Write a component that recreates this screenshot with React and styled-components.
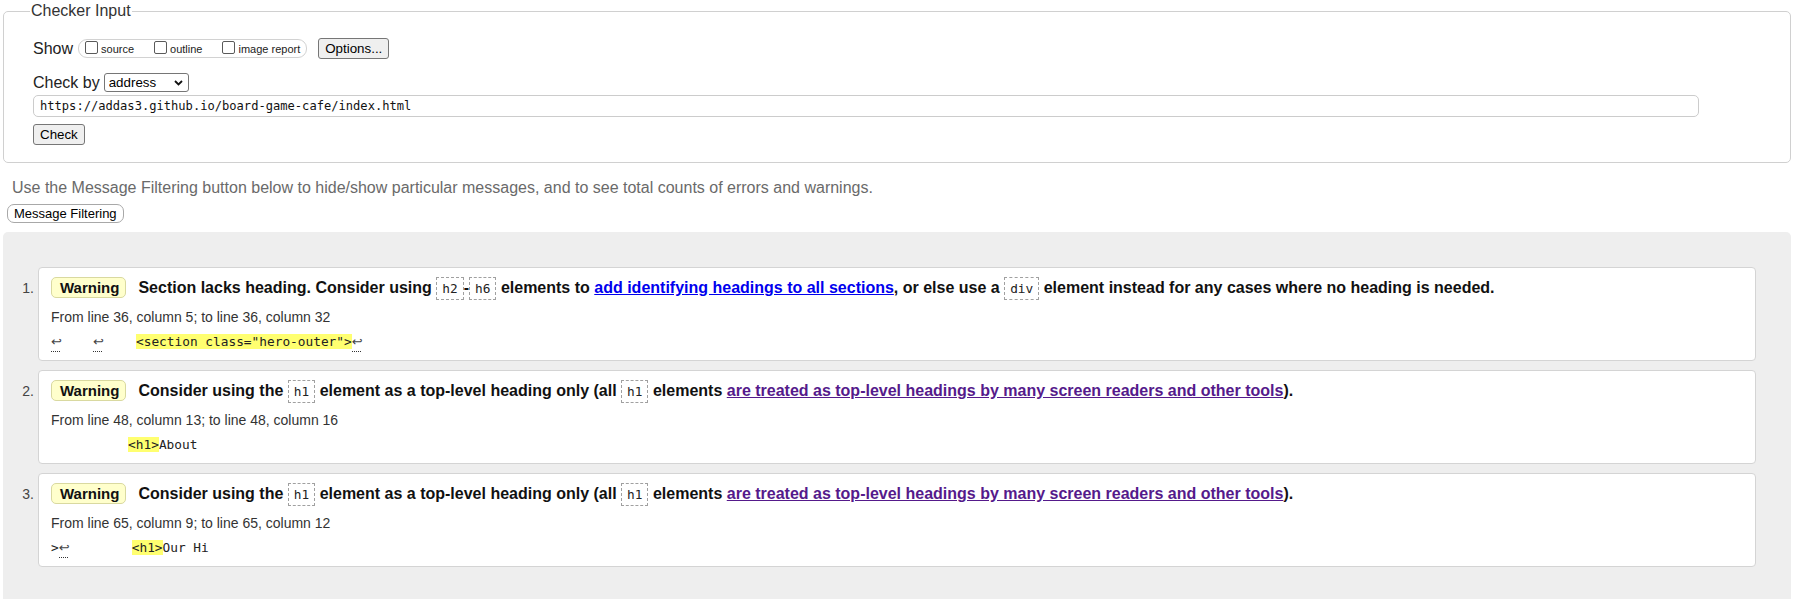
import React from 'react';
import styled, { createGlobalStyle } from 'styled-components';

const GlobalStyle = createGlobalStyle`
  html, body {
    margin: 0;
    padding: 0;
    background: #ffffff;
  }
  body {
    font-family: "Liberation Sans", Arial, sans-serif;
    color: #222222;
  }
`;

const Page = styled.div`
  padding: 2px 5px 0 3px;
`;

const CheckerFieldset = styled.fieldset`
  margin: 0;
  padding: 18px 29px 17px 29px;
  border: 1px solid #d0d0d0;
  border-radius: 5px;
  min-width: 0;
`;

const Legend = styled.legend`
  margin-left: -3px;
  padding: 0 1px;
  font-size: 16px;
  color: #333333;
`;

const OptionRow = styled.div`
  display: flex;
  align-items: center;
  height: 21px;
  margin-top: ${props => props.$top || 0}px;
  font-size: 16px;
  color: #222222;
`;

const RowLabel = styled.span`
  margin-right: ${props => props.$gap}px;
`;

const ShowGroup = styled.span`
  display: inline-flex;
  align-items: center;
  gap: 20px;
  height: 17px;
  padding: 0 6px;
  margin-right: 11px;
  border: 1px solid #d2d2d2;
  border-radius: 9px;
`;

const CheckLabel = styled.label`
  display: inline-flex;
  align-items: center;
  font-size: 11px;
  color: #222222;
`;

const Tick = styled.span`
  width: 13px;
  height: 13px;
  box-sizing: border-box;
  margin: 0 3px 2px 0;
  border: 1px solid #5a5a5a;
  border-radius: 2px;
  background: #ffffff;
`;

const Button = styled.button`
  height: 21px;
  padding: 0 6px;
  font-family: "Liberation Sans", Arial, sans-serif;
  font-size: 13.33px;
  line-height: 17px;
  color: #000000;
  background: #efefef;
  border: 1px solid #767676;
  border-radius: 3px;
`;

const SelectWrap = styled.span`
  position: relative;
  display: inline-flex;
`;

const Select = styled.select`
  appearance: none;
  width: 85px;
  height: 19px;
  padding: 0 0 0 4px;
  font-family: "Liberation Sans", Arial, sans-serif;
  font-size: 13.33px;
  color: #000000;
  background: #ffffff;
  border: 1px solid #767676;
  border-radius: 3px;
`;

const Chevron = styled.svg`
  position: absolute;
  right: 6px;
  top: 7px;
  pointer-events: none;
`;

const UrlInput = styled.input`
  display: block;
  box-sizing: border-box;
  width: 1666px;
  height: 22px;
  margin-top: 2px;
  padding: 0 6px;
  font-family: "DejaVu Sans Mono", "Liberation Mono", monospace;
  font-size: 12.1px;
  color: #111111;
  border: 1px solid #cccccc;
  border-radius: 5px;
`;

const CheckButton = styled(Button)`
  display: block;
  margin-top: 7px;
`;

const Hint = styled.p`
  margin: 16px 0 0 9px;
  font-size: 16px;
  line-height: 18px;
  color: #6a6a6a;
`;

const FilterButton = styled.button`
  display: block;
  height: 19px;
  margin: 7px 0 0 4px;
  padding: 0 6px;
  font-family: "Liberation Sans", Arial, sans-serif;
  font-size: 13px;
  line-height: 17px;
  color: #000000;
  background: #ffffff;
  border: 1px solid #a8a8a8;
  border-radius: 7px;
`;

const Results = styled.ol`
  margin: 9px 0 0 0;
  padding: 35px 35px 60px 0;
  list-style: none;
  background: #eeeeee;
  border-radius: 5px 5px 0 0;
`;

const Entry = styled.li`
  display: flex;
  align-items: baseline;
  margin-bottom: 9px;
`;

const Num = styled.span`
  flex: 0 0 35px;
  box-sizing: border-box;
  padding-right: 4px;
  text-align: right;
  font-size: 14px;
  color: #444444;
`;

const Card = styled.div`
  flex: 1;
  padding: 8px 12px 8px 12px;
  background: #ffffff;
  border: 1px solid #d4d4d4;
  border-radius: 4px;
`;

const Summary = styled.p`
  margin: 0;
  font-size: 16px;
  font-weight: bold;
  line-height: 24px;
  color: #111111;
`;

const Badge = styled.strong`
  display: inline-block;
  margin-right: 12px;
  padding: 0 6px 0 8px;
  font-size: 15px;
  line-height: 19px;
  background: #ffffcc;
  border: 1px solid #d9d9a0;
  border-radius: 5px;
`;

const Tag = styled.code`
  display: inline-block;
  padding: 0 5px;
  font-family: "DejaVu Sans Mono", "Liberation Mono", monospace;
  font-size: 12.8px;
  font-weight: normal;
  line-height: 21px;
  color: #222222;
  border: 1px dashed #a0a0a0;
`;

const Link = styled.a`
  color: ${props => (props.$visited ? '#551a8b' : '#0000ee')};
  text-decoration: underline;
`;

const Location = styled.p`
  margin: 7px 0 0 0;
  font-size: 14px;
  line-height: 20px;
  color: #333333;
`;

const Extract = styled.pre`
  margin: 5px 0 0 0;
  font-family: "DejaVu Sans Mono", "Liberation Mono", monospace;
  font-size: 12.8px;
  line-height: 20px;
  color: #222222;
  white-space: pre;
`;

const Mark = styled.mark`
  background: #ffff70;
  color: #222222;
`;

const Lf = styled.abbr`
  display: inline-block;
  width: 9px;
  margin-right: ${props => props.$after || 0}px;
  padding-bottom: 2px;
  font-family: "DejaVu Sans", sans-serif;
  font-size: 13px;
  line-height: 15px;
  color: #444444;
  text-decoration: none;
  border-bottom: 1px dotted #333333;
`;

const messages = [
  {
    id: 1,
    summary: (
      <>
        Section lacks heading. Consider using <Tag>h2</Tag>-<Tag>h6</Tag> elements to{' '}
        <Link href="#">add identifying headings to all sections</Link>, or else use a <Tag>div</Tag>{' '}
        element instead for any cases where no heading is needed.
      </>
    ),
    location: 'From line 36, column 5; to line 36, column 32',
    extract: (
      <>
        <Lf $after={33}>↩</Lf><Lf $after={34}>↩</Lf><Mark>&lt;section class="hero-outer"&gt;</Mark><Lf>↩</Lf>
      </>
    ),
  },
  {
    id: 2,
    summary: (
      <>
        Consider using the <Tag>h1</Tag> element as a top-level heading only (all <Tag>h1</Tag> elements{' '}
        <Link href="#" $visited>are treated as top-level headings by many screen readers and other tools</Link>).
      </>
    ),
    location: 'From line 48, column 13; to line 48, column 16',
    extract: (
      <>
        {'          '}<Mark>&lt;h1&gt;</Mark>About
      </>
    ),
  },
  {
    id: 3,
    summary: (
      <>
        Consider using the <Tag>h1</Tag> element as a top-level heading only (all <Tag>h1</Tag> elements{' '}
        <Link href="#" $visited>are treated as top-level headings by many screen readers and other tools</Link>).
      </>
    ),
    location: 'From line 65, column 9; to line 65, column 12',
    extract: (
      <>
        &gt;<Lf $after={64}>↩</Lf><Mark>&lt;h1&gt;</Mark>Our Hi
      </>
    ),
  },
];

export default function App() {
  return (
    <Page>
      <GlobalStyle />
      <CheckerFieldset>
        <Legend>Checker Input</Legend>
        <OptionRow>
          <RowLabel $gap={5}>Show</RowLabel>
          <ShowGroup>
            <CheckLabel><Tick />source</CheckLabel>
            <CheckLabel><Tick />outline</CheckLabel>
            <CheckLabel><Tick />image report</CheckLabel>
          </ShowGroup>
          <Button type="button">Options...</Button>
        </OptionRow>
        <OptionRow $top={13}>
          <RowLabel $gap={4}>Check by</RowLabel>
          <SelectWrap>
            <Select defaultValue="address">
              <option value="address">address</option>
              <option value="upload">file upload</option>
              <option value="input">text input</option>
            </Select>
            <Chevron width="9" height="6" viewBox="0 0 9 6">
              <path d="M1 1 L4.5 4.5 L8 1" fill="none" stroke="#111" strokeWidth="1.8" />
            </Chevron>
          </SelectWrap>
        </OptionRow>
        <UrlInput defaultValue="https://addas3.github.io/board-game-cafe/index.html" />
        <CheckButton type="button">Check</CheckButton>
      </CheckerFieldset>
      <Hint>
        Use the Message Filtering button below to hide/show particular messages, and to see total counts of errors and warnings.
      </Hint>
      <FilterButton type="button">Message Filtering</FilterButton>
      <Results>
        {messages.map(msg => (
          <Entry key={msg.id}>
            <Num>{msg.id}.</Num>
            <Card>
              <Summary>
                <Badge>Warning</Badge>
                {msg.summary}
              </Summary>
              <Location>{msg.location}</Location>
              <Extract>{msg.extract}</Extract>
            </Card>
          </Entry>
        ))}
      </Results>
    </Page>
  );
}
